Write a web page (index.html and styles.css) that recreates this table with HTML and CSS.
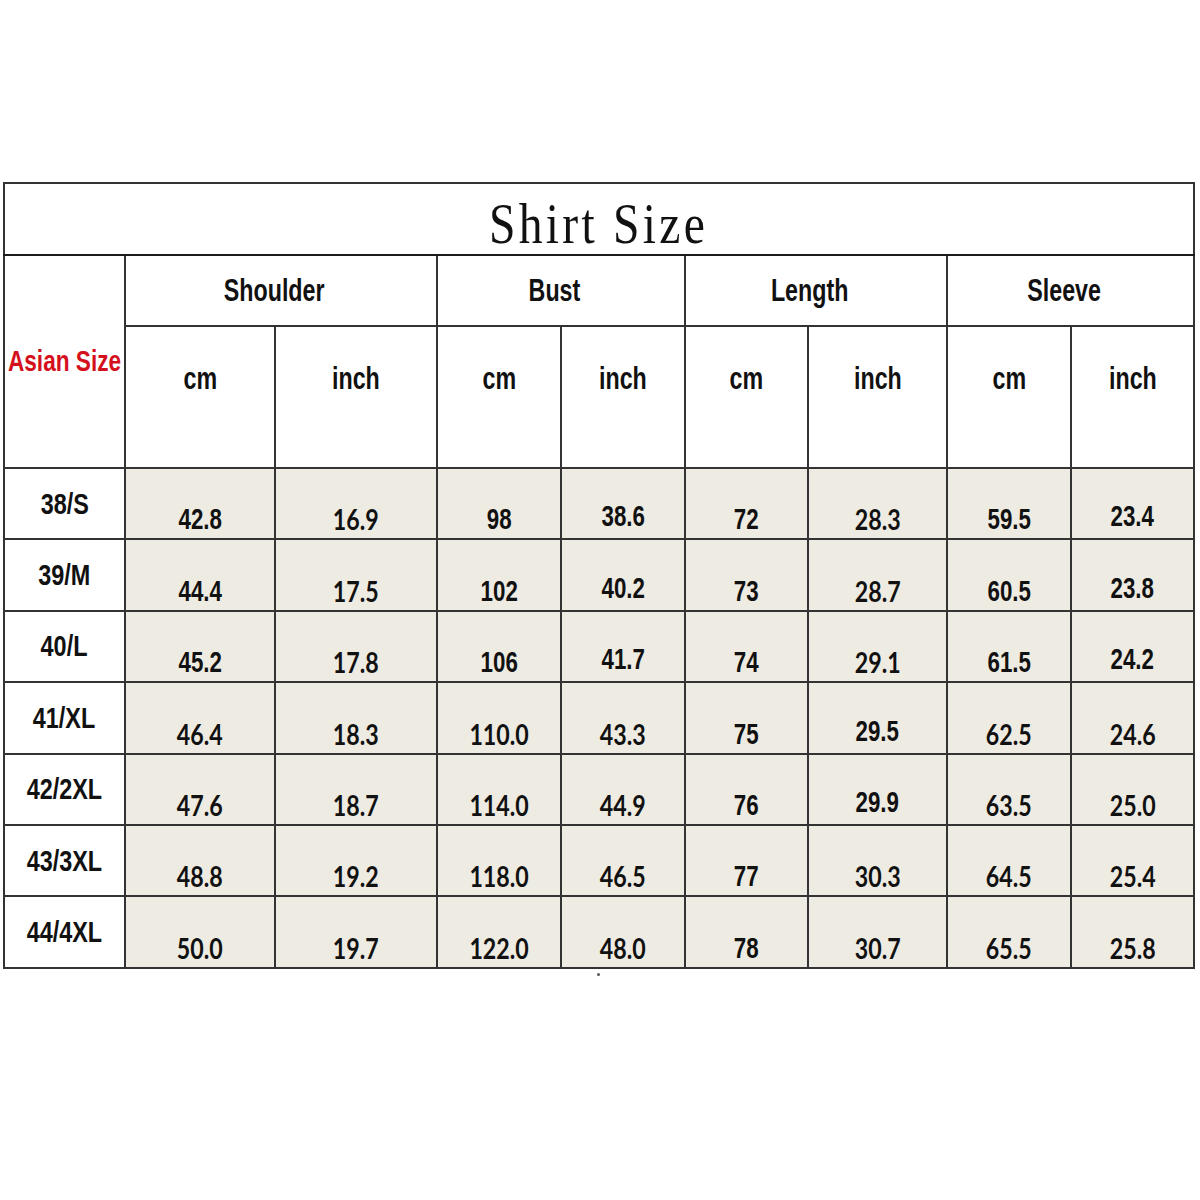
FILE: index.html
```html
<!DOCTYPE html>
<html>
<head>
<meta charset="utf-8">
<title>Shirt Size</title>
<link rel="stylesheet" href="styles.css">
</head>
<body>
<div class="page">
<table class="chart">
  <colgroup>
    <col class="w121"><col class="w150"><col class="w162"><col class="w124"><col class="w124"><col class="w123"><col class="w139"><col class="w124"><col class="w123">
  </colgroup>
  <tr class="r-title"><td colspan="9" class="title"><span class="title-text">Shirt Size</span></td></tr>
  <tr class="r-h1">
    <td rowspan="2" class="asian"><span class="sq hd red">Asian Size</span></td>
    <td colspan="2" class="hcell"><span class="sq hd">Shoulder</span></td>
    <td colspan="2" class="hcell"><span class="sq hd">Bust</span></td>
    <td colspan="2" class="hcell"><span class="sq hd">Length</span></td>
    <td colspan="2" class="hcell"><span class="sq hd">Sleeve</span></td>
  </tr>
  <tr class="r-h2">
    <td class="unit"><span class="sq hd">cm</span></td><td class="unit"><span class="sq hd">inch</span></td>
    <td class="unit"><span class="sq hd">cm</span></td><td class="unit"><span class="sq hd">inch</span></td>
    <td class="unit"><span class="sq hd">cm</span></td><td class="unit"><span class="sq hd">inch</span></td>
    <td class="unit"><span class="sq hd">cm</span></td><td class="unit"><span class="sq hd">inch</span></td>
  </tr>
  <tr class="r-d">
    <td class="size"><span class="sq sz">38/S</span></td>
    <td class="v vb"><span class="sq nb">42.8</span></td><td class="v vc"><span class="sq cal">16.9</span></td>
    <td class="v vb"><span class="sq nb">98</span></td><td class="v vn"><span class="sq nb">38.6</span></td>
    <td class="v vb"><span class="sq nb">72</span></td><td class="v vc"><span class="sq cal">28.3</span></td>
    <td class="v vb"><span class="sq nb">59.5</span></td><td class="v vn"><span class="sq nb">23.4</span></td>
  </tr>
  <tr class="r-d">
    <td class="size"><span class="sq sz">39/M</span></td>
    <td class="v vb"><span class="sq nb">44.4</span></td><td class="v vc"><span class="sq cal">17.5</span></td>
    <td class="v vb"><span class="sq nb">102</span></td><td class="v vn"><span class="sq nb">40.2</span></td>
    <td class="v vb"><span class="sq nb">73</span></td><td class="v vc"><span class="sq cal">28.7</span></td>
    <td class="v vb"><span class="sq nb">60.5</span></td><td class="v vn"><span class="sq nb">23.8</span></td>
  </tr>
  <tr class="r-d">
    <td class="size"><span class="sq sz">40/L</span></td>
    <td class="v vb"><span class="sq nb">45.2</span></td><td class="v vc"><span class="sq cal">17.8</span></td>
    <td class="v vb"><span class="sq nb">106</span></td><td class="v vn"><span class="sq nb">41.7</span></td>
    <td class="v vb"><span class="sq nb">74</span></td><td class="v vc"><span class="sq cal">29.1</span></td>
    <td class="v vb"><span class="sq nb">61.5</span></td><td class="v vn"><span class="sq nb">24.2</span></td>
  </tr>
  <tr class="r-d">
    <td class="size"><span class="sq sz">41/XL</span></td>
    <td class="v vc"><span class="sq cal">46.4</span></td><td class="v vc"><span class="sq cal">18.3</span></td>
    <td class="v vc"><span class="sq cal">110.0</span></td><td class="v vc"><span class="sq cal">43.3</span></td>
    <td class="v vb"><span class="sq nb">75</span></td><td class="v vn"><span class="sq nb">29.5</span></td>
    <td class="v vc"><span class="sq cal">62.5</span></td><td class="v vc"><span class="sq cal">24.6</span></td>
  </tr>
  <tr class="r-d">
    <td class="size"><span class="sq sz">42/2XL</span></td>
    <td class="v vc"><span class="sq cal">47.6</span></td><td class="v vc"><span class="sq cal">18.7</span></td>
    <td class="v vc"><span class="sq cal">114.0</span></td><td class="v vc"><span class="sq cal">44.9</span></td>
    <td class="v vb"><span class="sq nb">76</span></td><td class="v vn"><span class="sq nb">29.9</span></td>
    <td class="v vc"><span class="sq cal">63.5</span></td><td class="v vc"><span class="sq cal">25.0</span></td>
  </tr>
  <tr class="r-d">
    <td class="size"><span class="sq sz">43/3XL</span></td>
    <td class="v vc"><span class="sq cal">48.8</span></td><td class="v vc"><span class="sq cal">19.2</span></td>
    <td class="v vc"><span class="sq cal">118.0</span></td><td class="v vc"><span class="sq cal">46.5</span></td>
    <td class="v vb"><span class="sq nb">77</span></td><td class="v vc"><span class="sq cal">30.3</span></td>
    <td class="v vc"><span class="sq cal">64.5</span></td><td class="v vc"><span class="sq cal">25.4</span></td>
  </tr>
  <tr class="r-d">
    <td class="size"><span class="sq sz">44/4XL</span></td>
    <td class="v vc"><span class="sq cal">50.0</span></td><td class="v vc"><span class="sq cal">19.7</span></td>
    <td class="v vc"><span class="sq cal">122.0</span></td><td class="v vc"><span class="sq cal">48.0</span></td>
    <td class="v vb"><span class="sq nb">78</span></td><td class="v vc"><span class="sq cal">30.7</span></td>
    <td class="v vc"><span class="sq cal">65.5</span></td><td class="v vc"><span class="sq cal">25.8</span></td>
  </tr>
</table>
<div class="dot"></div>
</div>
</body>
</html>
```
FILE: styles.css
```css
html, body {
  margin: 0;
  padding: 0;
  background: #ffffff;
}
.page {
  padding-top: 182px;
  padding-left: 3px;
}
.chart {
  border-collapse: collapse;
  table-layout: fixed;
  width: 1190px;
  border: 2px solid #1c1c1c;
  font-family: "Liberation Sans", Arial, sans-serif;
  color: #111;
}
.w121 { width: 121px; }
.w150 { width: 150px; }
.w162 { width: 162px; }
.w124 { width: 124px; }
.w123 { width: 123px; }
.w139 { width: 139px; }
.chart td {
  border: 2px solid #333333;
  padding: 0;
  text-align: center;
  line-height: 1;
}
.r-title { height: 72px; }
.r-h1 { height: 71px; }
.r-h2 { height: 142px; }
.r-d { height: 71.4px; }
.chart .title {
  border-bottom: 2px solid #1c1c1c;
  vertical-align: bottom;
  padding-bottom: 1px;
}
.title-text {
  display: inline-block;
  font-family: "Liberation Serif", "Times New Roman", serif;
  font-size: 58px;
  letter-spacing: 4px;
  transform: scaleX(0.82);
  color: #111;
}
.sq {
  display: inline-block;
  white-space: nowrap;
}
.hd {
  font-size: 31px;
  font-weight: bold;
  transform: scaleX(0.75);
}
.red {
  color: #d4101c;
  font-size: 29px;
  transform: scaleX(0.78);
  margin: 0 -40px;
}
.asian {
  vertical-align: middle;
}
.hcell {
  vertical-align: middle;
  padding-right: 13px !important;
}
.unit {
  vertical-align: top;
  padding-top: 36px !important;
}
.size {
  vertical-align: middle;
  background: #ffffff;
}
.sz {
  font-size: 30px;
  font-weight: bold;
  transform: scaleX(0.78);
}
.v {
  background: #eeebe2;
  vertical-align: bottom;
}
.vb { padding-bottom: 4px !important; }
.vn { padding-bottom: 7px !important; }
.vc { padding-bottom: 5px !important; }
.nb {
  font-size: 29px;
  font-weight: bold;
  transform: scaleX(0.77);
}
.cal {
  font-family: Lato, "Liberation Sans", sans-serif;
  font-size: 29px;
  font-weight: 700;
  transform: scaleX(0.8);
}
.dot {
  width: 3px;
  height: 3px;
  border-radius: 50%;
  background: #555;
  margin-left: 594px;
  margin-top: 4px;
}
```
